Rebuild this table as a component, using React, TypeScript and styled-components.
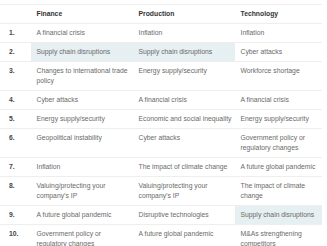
import React from 'react';
import styled, { createGlobalStyle } from 'styled-components';

const GlobalStyle = createGlobalStyle`
  html, body {
    margin: 0;
    padding: 0;
    background: #ffffff;
  }
  body {
    font-family: "Liberation Sans", Arial, sans-serif;
  }
`;

const Wrapper = styled.div`
  padding-top: 4px;
  width: 327px;
  overflow: hidden;
`;

const Table = styled.table`
  width: 322px;
  border-collapse: collapse;
  table-layout: fixed;
  font-size: 6.8px;
  line-height: 10px;
  color: #6a6a6a;
`;

const Col = styled.col<{ $w: number }>`
  width: ${(p) => p.$w}px;
`;

const HeadCell = styled.th`
  box-sizing: border-box;
  height: 19px;
  text-align: left;
  font-weight: 700;
  color: #333333;
  padding: 4px 3px 4px 5.5px;
  border-top: 1px solid #eeeeee;
  border-bottom: 1px solid #eeeeee;
`;

const Row = styled.tr`
  border-bottom: 1px solid #eeeeee;
`;

const NumCell = styled.td`
  box-sizing: border-box;
  padding: 4px 3px 4px 9px;
  vertical-align: top;
  font-weight: 700;
  color: #444444;
`;

const Cell = styled.td<{ $hl?: boolean }>`
  box-sizing: border-box;
  padding: 4px 3px 4px 5.5px;
  vertical-align: top;
  background: ${(p) => (p.$hl ? '#e6eff1' : 'transparent')};
`;

type Item = { text: string; hl?: boolean };

const rows: Item[][] = [
  [{ text: 'A financial crisis' }, { text: 'Inflation' }, { text: 'Inflation' }],
  [
    { text: 'Supply chain disruptions', hl: true },
    { text: 'Supply chain disruptions', hl: true },
    { text: 'Cyber attacks' },
  ],
  [
    { text: 'Changes to international trade policy' },
    { text: 'Energy supply/security' },
    { text: 'Workforce shortage' },
  ],
  [{ text: 'Cyber attacks' }, { text: 'A financial crisis' }, { text: 'A financial crisis' }],
  [
    { text: 'Energy supply/security' },
    { text: 'Economic and social inequality' },
    { text: 'Energy supply/security' },
  ],
  [
    { text: 'Geopolitical instability' },
    { text: 'Cyber attacks' },
    { text: 'Government policy or regulatory changes' },
  ],
  [
    { text: 'Inflation' },
    { text: 'The impact of climate change' },
    { text: 'A future global pandemic' },
  ],
  [
    { text: 'Valuing/protecting your company’s IP' },
    { text: 'Valuing/protecting your company’s IP' },
    { text: 'The impact of climate change' },
  ],
  [
    { text: 'A future global pandemic' },
    { text: 'Disruptive technologies' },
    { text: 'Supply chain disruptions', hl: true },
  ],
  [
    { text: 'Government policy or regulatory changes' },
    { text: 'A future global pandemic' },
    { text: 'M&As strengthening competitors' },
  ],
];

export default function App() {
  return (
    <Wrapper>
      <GlobalStyle />
      <Table>
        <colgroup>
          <Col $w={31} />
          <Col $w={102} />
          <Col $w={102} />
          <Col $w={87} />
        </colgroup>
        <thead>
          <tr>
            <HeadCell />
            <HeadCell>Finance</HeadCell>
            <HeadCell>Production</HeadCell>
            <HeadCell>Technology</HeadCell>
          </tr>
        </thead>
        <tbody>
          {rows.map((r, i) => (
            <Row key={i}>
              <NumCell>{i + 1}.</NumCell>
              {r.map((c, j) => (
                <Cell key={j} $hl={c.hl}>
                  {c.text}
                </Cell>
              ))}
            </Row>
          ))}
        </tbody>
      </Table>
    </Wrapper>
  );
}
